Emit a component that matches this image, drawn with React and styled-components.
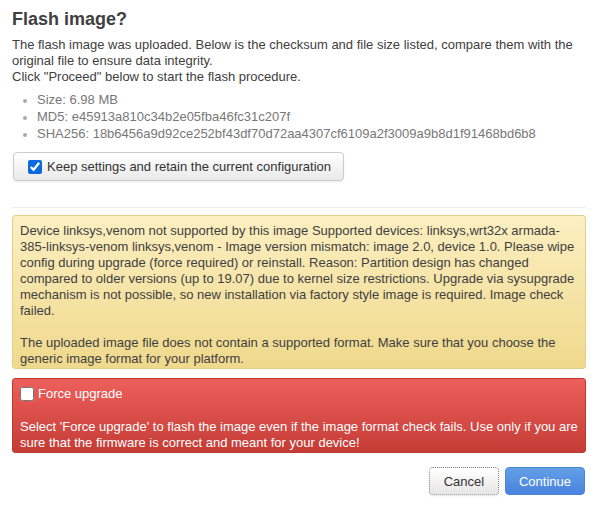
import styled, { createGlobalStyle } from 'styled-components'

const GlobalStyle = createGlobalStyle`
  body {
    margin: 0;
    background: #fff;
    font-family: "Liberation Sans", Arial, sans-serif;
    font-size: 13px;
    color: #404040;
  }
`

const checksums = [
  { label: 'Size', value: '6.98 MB' },
  { label: 'MD5', value: 'e45913a810c34b2e05fba46fc31c207f' },
  { label: 'SHA256', value: '18b6456a9d92ce252bf43df70d72aa4307cf6109a2f3009a9b8d1f91468bd6b8' },
]

export default function App() {
  return (
    <>
      <GlobalStyle />
      <Modal>
        <Title>Flash image?</Title>
        <Text>
          The flash image was uploaded. Below is the checksum and file size listed, compare them with the
          original file to ensure data integrity.
          <br />
          Click "Proceed" below to start the flash procedure.
        </Text>
        <Sums>
          {checksums.map((c) => (
            <li key={c.label}>
              {c.label}: {c.value}
            </li>
          ))}
        </Sums>
        <CheckButton>
          <Check type="checkbox" defaultChecked />
          Keep settings and retain the current configuration
        </CheckButton>
        <Divider />
        <Alert variant="warning">
          <p>
            Device linksys,venom not supported by this image Supported devices: linksys,wrt32x armada-385-linksys-venom
            linksys,venom - Image version mismatch: image 2.0, device 1.0. Please wipe config during upgrade (force
            required) or reinstall. Reason: Partition design has changed compared to older versions (up to 19.07) due to
            kernel size restrictions. Upgrade via sysupgrade mechanism is not possible, so new installation via factory
            style image is required. Image check failed.
          </p>
          <p>
            The uploaded image file does not contain a supported format. Make sure that you choose the generic image
            format for your platform.
          </p>
        </Alert>
        <Alert variant="danger">
          <ForceLabel>
            <Check type="checkbox" />
            Force upgrade
          </ForceLabel>
          <p>
            Select 'Force upgrade' to flash the image even if the image format check fails. Use only if you are sure
            that the firmware is correct and meant for your device!
          </p>
        </Alert>
        <Footer>
          <Button focused>Cancel</Button>
          <Button primary>Continue</Button>
        </Footer>
      </Modal>
    </>
  )
}

const Modal = styled.div`
  padding: 8px 12px 12px 12px;
`

const Title = styled.h4`
  margin: 0 0 7px 0;
  font-size: 18px;
  line-height: 22px;
  font-weight: bold;
  color: #404040;
`

const Text = styled.p`
  margin: 0;
  line-height: 16px;
`

const Sums = styled.ul`
  margin: 6px 0 10px 0;
  padding: 0 0 0 25px;
  color: #777;
  line-height: 17px;
  li::marker {
    font-size: 12px;
    color: #aaa;
  }
`

const CheckButton = styled.label`
  display: inline-flex;
  align-items: center;
  gap: 4px;
  box-sizing: border-box;
  height: 29px;
  margin-left: 1px;
  padding: 0 12px 0 14px;
  border: 1px solid #ccc;
  border-radius: 4px;
  background: linear-gradient(#fff, #e9e9e9);
  color: #333;
  box-shadow: 0 1px 2px rgba(0, 0, 0, 0.08);
`

const Check = styled.input`
  margin: 0 1px 0 0;
  width: 14px;
  height: 14px;
  accent-color: #0b6bde;
`

const Divider = styled.hr`
  margin: 26px 0 7px 0;
  border: 0;
  border-top: 1px solid #eee;
`

const Alert = styled.div`
  box-sizing: border-box;
  padding: 7px 7px 1px 7px;
  margin-bottom: 9px;
  border-radius: 3px;
  line-height: 16px;
  border: 1px solid ${(p) => (p.variant === 'danger' ? '#c0392e' : '#e3cf8a')};
  background: ${(p) =>
    p.variant === 'danger'
      ? 'linear-gradient(#ee5f5b, #c43c35)'
      : 'linear-gradient(#fcefc1, #efd98c)'};
  color: ${(p) => (p.variant === 'danger' ? '#fff' : '#404040')};
  p {
    margin: 0;
  }
  p + p {
    margin-top: 16px;
  }
`

const ForceLabel = styled.label`
  display: flex;
  align-items: center;
  gap: 3px;
  height: 16px;
  margin-bottom: 17px;
`

const Footer = styled.div`
  display: flex;
  justify-content: flex-end;
  gap: 6px;
  margin-top: 14px;
  padding-right: 1px;
`

const Button = styled.button`
  height: 28px;
  padding: 0 13px;
  font-family: inherit;
  font-size: 13px;
  border-radius: 4px;
  cursor: pointer;
  border: ${(p) => (p.focused ? '1px dotted #888' : '1px solid #4a86d8')};
  background: ${(p) => (p.primary ? 'linear-gradient(#62a0e6, #4a82de)' : 'linear-gradient(#fff, #e6e6e6)')};
  color: ${(p) => (p.primary ? '#fff' : '#333')};
  box-shadow: ${(p) => (p.primary ? 'none' : '0 1px 2px rgba(0,0,0,0.1)')};
  min-width: ${(p) => (p.primary ? '79px' : '70px')};
`
